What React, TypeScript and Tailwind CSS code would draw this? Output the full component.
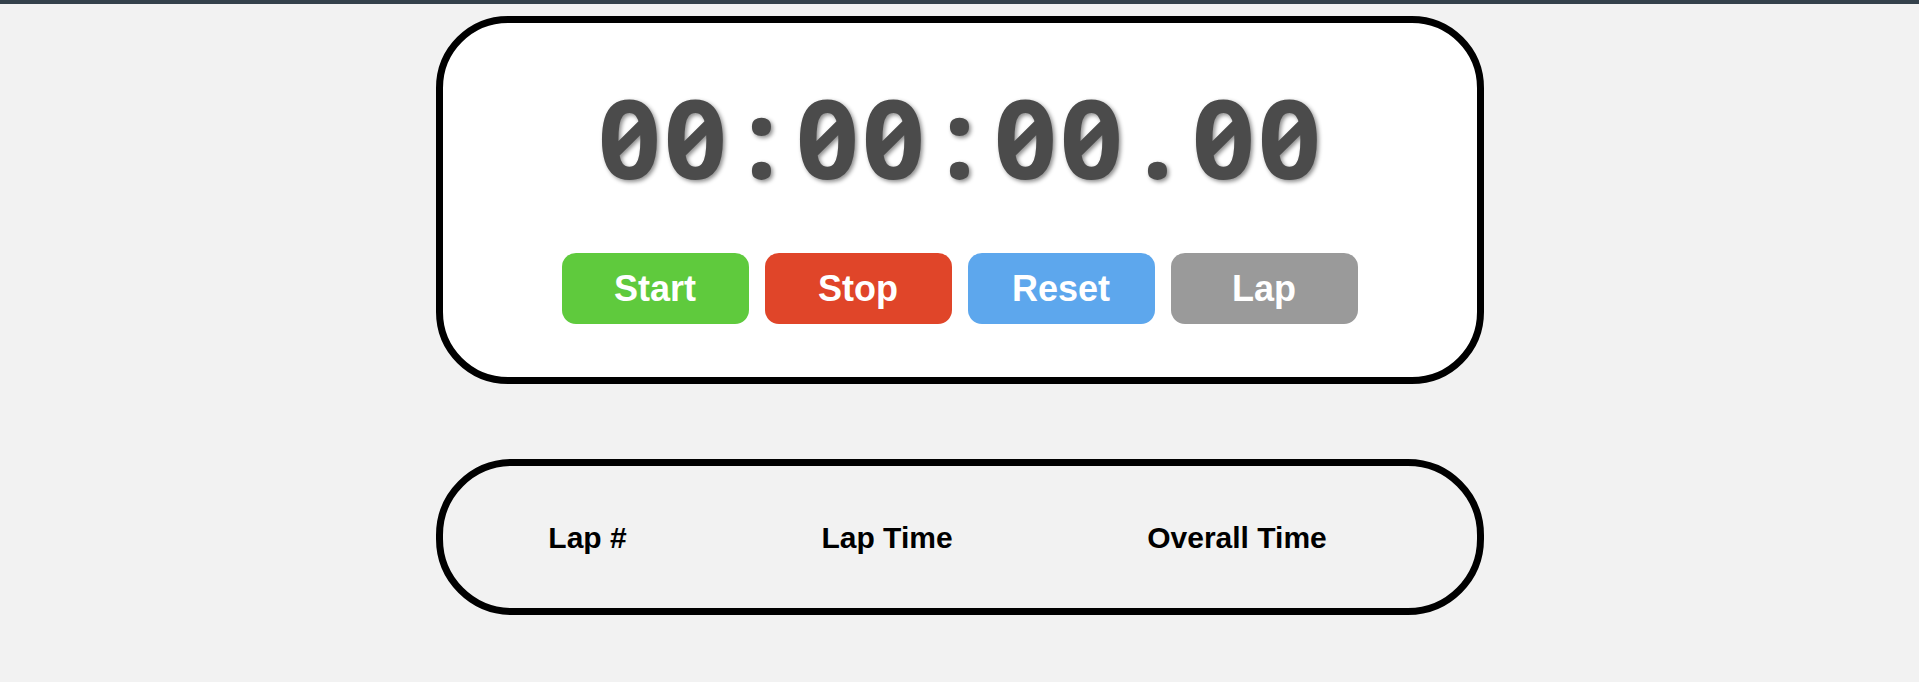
import React from "react";

export default function App() {
  const buttons = [
    { label: "Start", cls: "bg-[#5fca3d]" },
    { label: "Stop", cls: "bg-[#e04529]" },
    { label: "Reset", cls: "bg-[#5da7ed]" },
    { label: "Lap", cls: "bg-[#9a9a9a]" },
  ];
  const time = "00:00:00.00".split("");
  return (
    <div className="min-h-[682px] w-full bg-[#f2f2f2] font-['Liberation_Sans',Arial,sans-serif]">
      <div className="h-[4px] w-full bg-[#34414b]" />
      <div className="mx-auto mt-[12px] flex w-[1048px] flex-col items-center rounded-[72px] border-[7px] border-black bg-white pt-[49px] pb-[53px]">
        <div className="flex font-['Noto_Sans',sans-serif] text-[110px] font-bold leading-[128px] text-[#4b4b4b] [font-feature-settings:'zero','tnum'] [text-shadow:2px_2px_4px_rgba(0,0,0,0.45)]">
          {time.map((c, i) => (
            <span key={i} className="inline-block w-[66px] text-center">
              {c}
            </span>
          ))}
        </div>
        <div className="mt-[53px] flex gap-[16px]">
          {buttons.map((b) => (
            <button
              key={b.label}
              className={`flex h-[71px] w-[187px] items-center justify-center rounded-[14px] text-[36px] font-bold text-white ${b.cls}`}
            >
              {b.label}
            </button>
          ))}
        </div>
      </div>
      <div className="mx-auto mt-[75px] flex h-[156px] w-[1048px] items-center rounded-[76px] border-[7px] border-black">
        <div className="grid grid-cols-[290px_309px_391px] text-[30px] font-bold text-black">
          <div className="text-center">Lap #</div>
          <div className="text-center">Lap Time</div>
          <div className="text-center">Overall Time</div>
        </div>
      </div>
    </div>
  );
}
